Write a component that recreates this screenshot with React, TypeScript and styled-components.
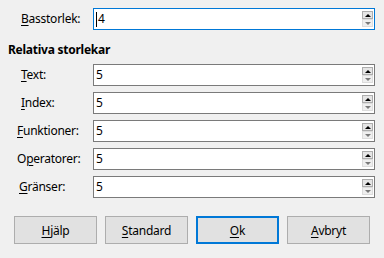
import React from "react";
import styled, { createGlobalStyle } from "styled-components";

const Global = createGlobalStyle`
  html, body { margin: 0; padding: 0; background: #f0f0f0; }
  body { font-family: "Noto Sans", "Open Sans", sans-serif; font-size: 12px; color: #000; letter-spacing: -0.25px; }
`;

const Page = styled.div`
  width: 384px;
  height: 258px;
  box-sizing: border-box;
  padding: 8px 9px 0 8px;
  display: flex;
  flex-direction: column;
`;

const Row = styled.div<{ $top?: number }>`
  display: flex;
  align-items: center;
  height: 22px;
  margin-top: ${(p) => p.$top ?? 6}px;
`;

const Label = styled.label<{ $indent: number }>`
  width: ${(p) => 85 - p.$indent}px;
  padding-left: ${(p) => p.$indent}px;
  flex: none;
  line-height: 16px;
  white-space: nowrap;
`;

const U = styled.span`
  text-decoration: underline;
  text-underline-offset: 2px;
`;

const Heading = styled.div`
  font-weight: 700;
  line-height: 16px;
  margin-top: 12px;
`;

const Spin = styled.div<{ $focus?: boolean }>`
  flex: 1;
  height: 22px;
  box-sizing: border-box;
  border: 1px solid ${(p) => (p.$focus ? "#0078d7" : "#7a7a7a")};
  background: #fff;
  display: flex;
`;

const Value = styled.div`
  flex: 1;
  padding-left: 2px;
  line-height: 20px;
  display: flex;
  align-items: center;
`;

const Caret = styled.span`
  width: 1px;
  height: 15px;
  background: #000;
  margin-right: 1px;
`;

const SpinCol = styled.div`
  display: flex;
  flex-direction: column;
  padding: 2px 1px 2px 0;
`;

const SpinBtn = styled.div<{ $dim?: boolean }>`
  width: 11px;
  height: 8px;
  box-sizing: border-box;
  border: 1px solid ${(p) => (p.$dim ? "#dcdcdc" : "#adadad")};
  background: ${(p) => (p.$dim ? "#efefef" : "#e5e5e5")};
  display: flex;
  align-items: center;
  justify-content: center;
`;

const Tri = styled.div<{ $down?: boolean }>`
  width: 0;
  height: 0;
  border-left: 3px solid transparent;
  border-right: 3px solid transparent;
  ${(p) =>
    p.$down
      ? "border-top: 3px solid #7a7a7a;"
      : "border-bottom: 3px solid #000;"}
`;

const Buttons = styled.div`
  display: flex;
  gap: 8px;
  margin-top: 18px;
  padding-left: 6px;
`;

const Button = styled.button<{ $default?: boolean }>`
  width: 83px;
  height: 28px;
  box-sizing: border-box;
  font: inherit;
  letter-spacing: inherit;
  color: #000;
  background: #e1e1e1;
  border: ${(p) => (p.$default ? "2px solid #0078d7" : "1px solid #adadad")};
  padding: 0;
`;

type Field = { pre?: string; key: string; rest: string; value: string; indent: number };

const fields: Field[] = [
  { key: "T", rest: "ext:", value: "5", indent: 13 },
  { key: "I", rest: "ndex:", value: "5", indent: 13 },
  { key: "F", rest: "unktioner:", value: "5", indent: 9 },
  { pre: "O", key: "p", rest: "eratorer:", value: "5", indent: 9 },
  { key: "G", rest: "ränser:", value: "5", indent: 11 },
];

const SpinField = ({ value, focus }: { value: string; focus?: boolean }) => (
  <Spin $focus={focus}>
    <Value>
      {focus && <Caret />}
      {value}
    </Value>
    <SpinCol>
      <SpinBtn>
        <Tri />
      </SpinBtn>
      <SpinBtn $dim>
        <Tri $down />
      </SpinBtn>
    </SpinCol>
  </Spin>
);

export default function App() {
  return (
    <>
      <Global />
      <Page>
        <Row $top={0}>
          <Label $indent={13}>
            <U>B</U>asstorlek:
          </Label>
          <SpinField value="4" focus />
        </Row>
        <Heading>Relativa storlekar</Heading>
        {fields.map((f) => (
          <Row key={f.rest}>
            <Label $indent={f.indent}>
              {f.pre}
              <U>{f.key}</U>
              {f.rest}
            </Label>
            <SpinField value={f.value} />
          </Row>
        ))}
        <Buttons>
          <Button>
            <U>H</U>jälp
          </Button>
          <Button>
            <U>S</U>tandard
          </Button>
          <Button $default>
            <U>O</U>k
          </Button>
          <Button>
            <U>A</U>vbryt
          </Button>
        </Buttons>
      </Page>
    </>
  );
}
